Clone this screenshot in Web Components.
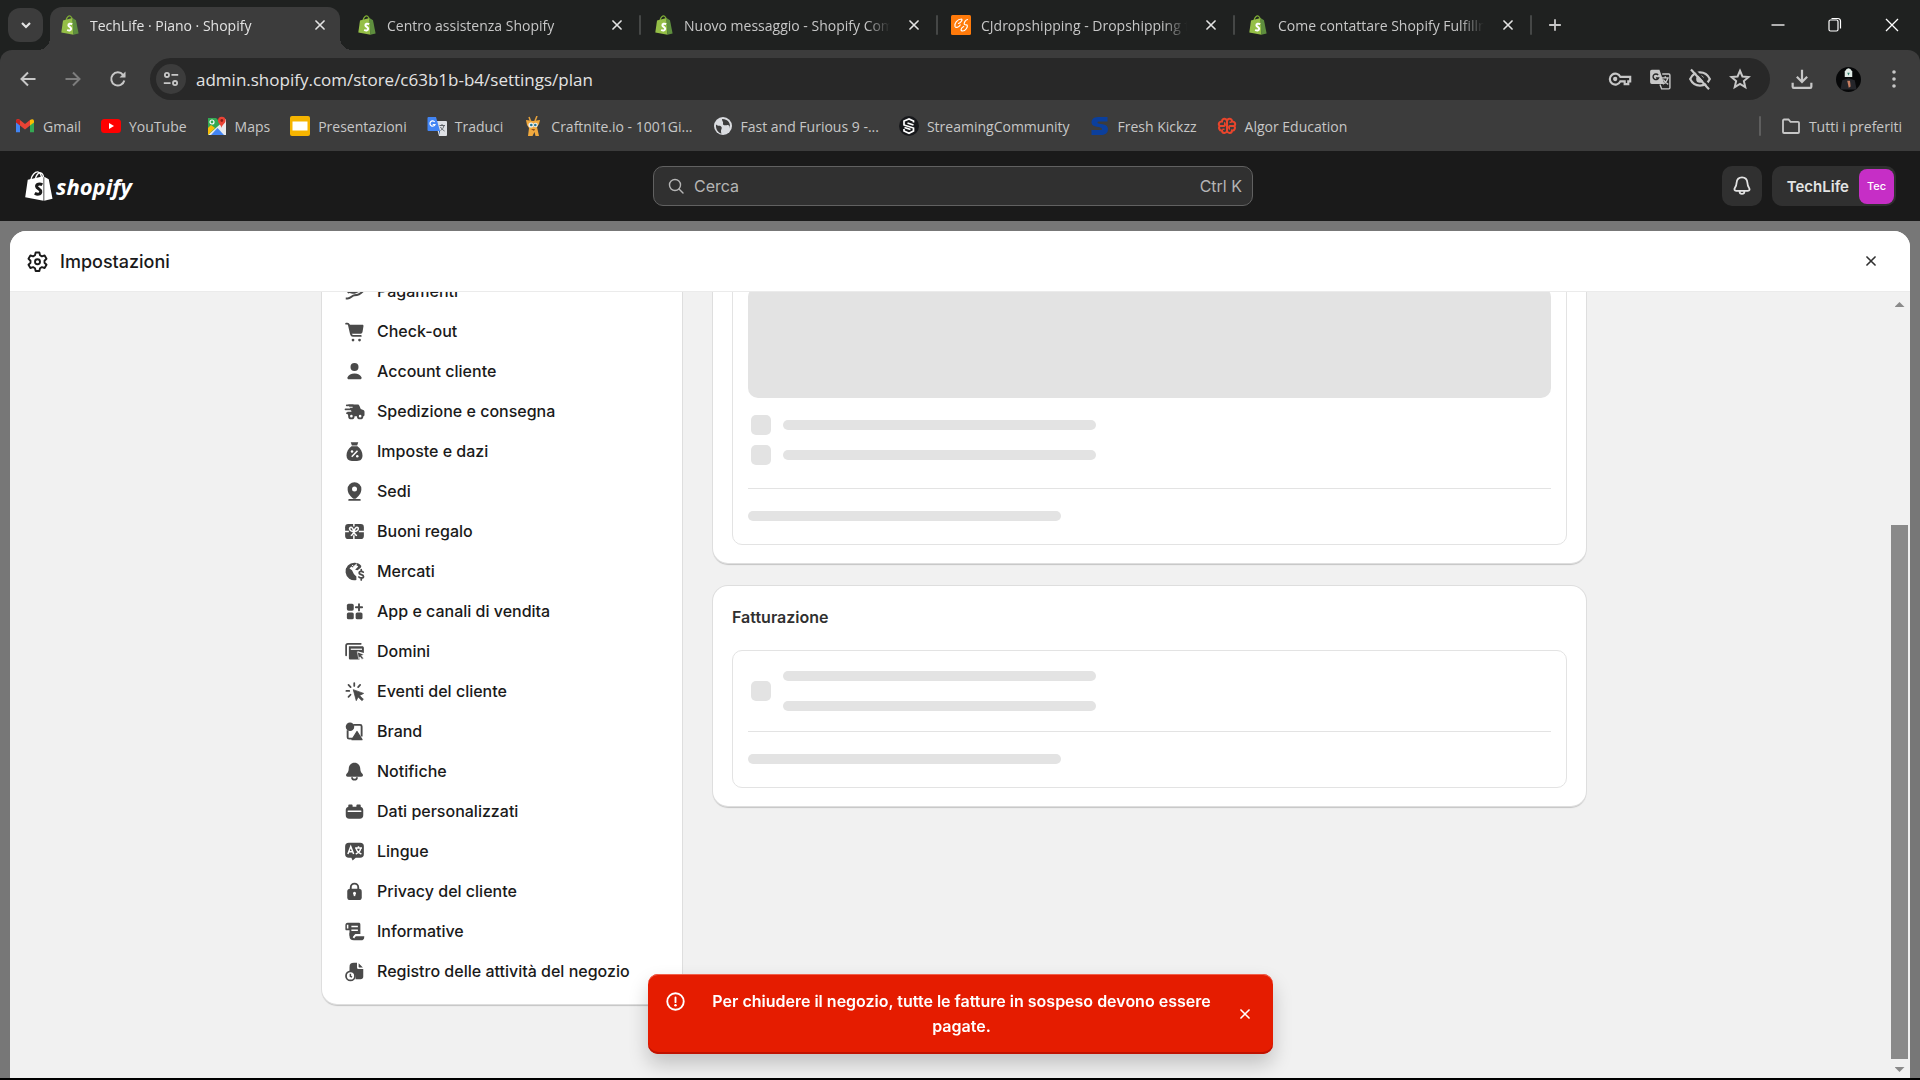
<!DOCTYPE html>
<html lang="it">
<head>
<meta charset="utf-8">
<title>TechLife · Piano · Shopify</title>
<style>
	body {
		margin: 0;
		background: #000;
		font-family: Inter, "Liberation Sans", sans-serif;
		color: #303030;
	}
</style>
</head>
<body>
<browser-window></browser-window>

<script>
const bagS = `d="M12.2 9.2c-1.8-1-4-.4-3.8 1.1.2 1.6 3 1.7 2.8 3.7-.2 1.7-2.3 1.8-4 .8" fill="none" stroke-width="2"`;

// every icon is drawn on a 20 x 20 grid
const ICONS = {
	chevron: `<path d="M6 8l4 4 4-4" fill="none" stroke="currentColor" stroke-width="2.2"/>`,
	close: `<path d="M5.5 5.5l9 9M14.5 5.5l-9 9" fill="none" stroke="currentColor" stroke-width="1.8" stroke-linecap="round"/>`,
	plus: `<path d="M10 3.5v13M3.5 10h13" stroke="currentColor" stroke-width="2"/>`,
	minimize: `<path d="M3.5 10h13" stroke="currentColor" stroke-width="1.3"/>`,
	restore: `<path d="M4 6.5A1.5 1.5 0 0 1 5.5 5h6A1.5 1.5 0 0 1 13 6.5v8a1.5 1.5 0 0 1-1.500 1.500h-6A1.500 1.500 0 0 1 4 14.500zM6.500 3.500H13A2.500 2.500 0 0 1 15.500 6v7.500" fill="none" stroke="currentColor" stroke-width="1.200"/>`,
	winclose: `<path d="M4 4l12 12M16 4L4 16" stroke="currentColor" stroke-width="1.3"/>`,
	back: `<path d="M17.500 10H3.500M10 3.500L3.500 10l6.500 6.500" fill="none" stroke="currentColor" stroke-width="2"/>`,
	forward: `<path d="M2.500 10h14M10 3.500l6.500 6.500-6.500 6.500" fill="none" stroke="currentColor" stroke-width="2"/>`,
	reload: `<path d="M16.300 11.500A6.600 6.600 0 1 1 15 5.800l1.600 1.700" fill="none" stroke="currentColor" stroke-width="2"/><path d="M17.500 2.500v6h-6z" fill="currentColor"/>`,
	tune: `<g fill="none" stroke="currentColor" stroke-width="2"><circle cx="5.500" cy="5.500" r="2.300"/><path d="M10.500 5.500H18M2 14.500h7.500"/><circle cx="14.500" cy="14.500" r="2.300"/></g>`,
	key: `<g fill="none" stroke="currentColor" stroke-width="1.800"><path d="M10.300 8.200H18.500v3.800h-1.600v2.300h-3v-2.300h-3.600a4.600 4.600 0 1 1 0-3.800z"/><circle cx="6" cy="10" r="1.300" fill="currentColor" stroke-width="1"/></g>`,
	translate: `<path d="M2.500 1.500h7l4.500 13H2.500a1.500 1.500 0 0 1-1.500-1.500V3a1.500 1.500 0 0 1 1.500-1.500z" fill="currentColor"/><path d="M8.300 6.300A2.600 2.600 0 1 0 8.700 9H6.300" fill="none" stroke="#282828" stroke-width="1.300"/><path d="M12 5.500h6a1 1 0 0 1 1 1V18a1 1 0 0 1-1 1h-6.500l-1.500-4M11.500 9h6.500M14.800 7.500V9M17 9.200c-.5 2.500-2.500 4.500-4.500 5.500M13 10.500c1 2 2.500 3.200 4.500 4.300" fill="none" stroke="currentColor" stroke-width="1.300"/>`,
	eyeoff: `<path d="M1.800 10C3.500 6.500 6.500 4.500 10 4.500s6.500 2 8.200 5.500c-1.700 3.500-4.700 5.500-8.200 5.500S3.500 13.500 1.800 10z" fill="none" stroke="currentColor" stroke-width="1.800"/><circle cx="10" cy="10" r="3.200" fill="currentColor"/><path d="M4.500 1.500l14 15" stroke="#282828" stroke-width="2"/><path d="M2.500 2l15 16.500" stroke="currentColor" stroke-width="1.800"/>`,
	star: `<path d="M10 2.500l2.200 5.200 5.600.5-4.300 3.700 1.300 5.500-4.800-2.900-4.800 2.900 1.300-5.500L2.200 8.200l5.600-.5z" fill="none" stroke="currentColor" stroke-width="1.800"/>`,
	download: `<path d="M10 1.500v11M5.300 8l4.700 4.700L14.700 8M1.500 13.500V17a1 1 0 0 0 1 1h15a1 1 0 0 0 1-1v-3.500" fill="none" stroke="currentColor" stroke-width="2"/>`,
	dots: `<g fill="currentColor"><circle cx="10" cy="3" r="1.800"/><circle cx="10" cy="10" r="1.800"/><circle cx="10" cy="17" r="1.800"/></g>`,
	avatar: `<circle cx="10" cy="10" r="10" fill="#070809"/><path d="M7 8V3.500Q10-1.500 13 3.500V8z" fill="#dfeae6"/><path d="M9 4.500h2L10 6.800z" fill="#2d7c68"/><path d="M3.500 18L5 10.500 10 9l5 1.500 1.500 7.500" fill="#24252a"/><path d="M9 11h2.200l.5 4.500-1.500 1z" fill="#c77e62"/>`,
	folder: `<path d="M2 4.500a1 1 0 0 1 1-1h4.500l2 2.300H17a1 1 0 0 1 1 1V16a1 1 0 0 1-1 1H3a1 1 0 0 1-1-1z" fill="none" stroke="currentColor" stroke-width="1.800"/>`,

	// site logos
	shopify: `<path d="M6 5.500C6.500 2 9 .3 10.500 1.200c1 .6 1.600 1.800 1.800 3.300" fill="none" stroke="#7fae35" stroke-width="1.200"/><path d="M3 5.600L12.500 3l1 16.800L1.300 17.500z" fill="#95bf47"/><path d="M12.500 3l3.500 2.300 2.600 13.200-5.300 1.300z" fill="#5e8e3e"/><path ${bagS} stroke="#fff"/>`,
	shopifywhite: `<path d="M4.500 6C5 2.800 7.500.2 9.500.7c1.300.4 2 2 2.200 3.800M7.500 5.500C8 3 9.500 1 11 1.200c1.200.3 1.900 1.500 2 3" fill="none" stroke="#fff" stroke-width=".9"/><path d="M2.500 5.800L13 3.500v16.300L.8 17.500zM13.500 3.800l3 1.700 2.500 13-5.500 1.300z" fill="#fff"/><path ${bagS} stroke="#1a1a1a"/>`,
	cj: `<rect width="20" height="20" rx="1.500" fill="#ff7a0a"/><path d="M10.500 4C6.500 4 3 8.500 4 11.500c1 2 4 .5 5.200-1.500M10.500 4c1.500.5-.8 4-3 4.500M16.500 4.500c-2 .5-3.500 3-3.300 4.700.2 1 2.800.3 3 .8.8 2-1.800 6-4.500 6-2.500 0-2-3 1-4.500" fill="none" stroke="#fff" stroke-width="1.200" stroke-linecap="round"/>`,
	gmail: `<path d="M1 4.500v11.700h4V9z" fill="#4285f4"/><path d="M19 4.500v11.700h-4V9z" fill="#34a853"/><path d="M1 4.500Q2.500 2 5 4l5 4 5-4v5.500l-5 4-5-4z" fill="#ea4335"/><path d="M1 4.500Q2 2.500 5 4v5.500L1 6.500z" fill="#c5221f"/><path d="M19 4.500Q18 2.500 15 4v5.500l4-3z" fill="#fbbc04"/>`,
	youtube: `<rect x="0" y="3" width="20" height="14" rx="3.500" fill="#f00"/><path d="M8 7l5 3-5 3z" fill="#fff"/>`,
	maps: `<path d="M1 2h8l10 10v7H1z" fill="#34a853"/><path d="M1 19L19 3v16z" fill="#e8eaed"/><path d="M4 19l6.500-7L17 19z" fill="#4285f4"/><path d="M1 12v7l7-7-4-3z" fill="#fbbc04"/><circle cx="5" cy="6" r="2" fill="none" stroke="#fff" stroke-width="1.200"/><path d="M14.500 12C14 8.500 11 7.500 11 4.500a3.800 3.800 0 0 1 7.600 0c0 3-3.600 4-4.100 7.500z" fill="#ea4335"/><circle cx="14.800" cy="4.500" r="1.400" fill="#8c1d16"/>`,
	slides: `<rect width="20" height="20" rx="2" fill="#f5b400"/><rect x="2.500" y="5.500" width="15" height="9" fill="#fff"/>`,
	gtranslate: `<path d="M8 5h11a1 1 0 0 1 1 1v13a1 1 0 0 1-1 1h-7z" fill="#dfe1e5"/><path d="M1.500 1h7.500l4 14H1.500a1 1 0 0 1-1-1V2a1 1 0 0 1 1-1z" fill="#4285f4"/><path d="M7.700 6A2.600 2.600 0 1 0 8 8.500H5.700" fill="none" stroke="#fff" stroke-width="1.200"/><path d="M12 15l1 0-1 4z" fill="#174ea6"/><path d="M12.500 9.500H18M15 8v1.500M17 9.500c-.5 2.500-2 4-3.500 5M13.500 11c1 2 2.500 3 4 4" fill="none" stroke="#5f6368" stroke-width="1"/>`,
	giraffe: `<path d="M6 1l1.500 4M14 0l-2 5" stroke="#e8a33c" stroke-width="1.500"/><path d="M3 4l7 1 7-1-1 4-2 3 2 9h-3.500l-1-4-2 4H5l1-8-2-3z" fill="#f0a93e"/><circle cx="8" cy="9" r="2.600" fill="#e9eff2"/><circle cx="12.500" cy="9" r="2.300" fill="#e9eff2"/><circle cx="8.300" cy="9" r="1.300" fill="#27758f"/><circle cx="12.300" cy="9" r="1.300" fill="#27758f"/><path d="M8 13h4l-1 2z" fill="#8a4b1c"/>`,
	globe: `<circle cx="10" cy="10" r="9" fill="#dadce0"/><path d="M3 8.500c2 2 4.500.5 5.500 2.500s-1.500 2.500 0 6.500C5 17 2.500 13 3 8.500zM9 3c0 2.500 1.500 2.500 1 4.500s2.500 2 4.500 1.500 2.500 2 1.500 4C18.500 9 16 3 9 3z" fill="#3c3c3c"/>`,
	streaming: `<circle cx="10" cy="10" r="10" fill="#17181b"/><path d="M14.500 6.500V5L10 3 5 5v4l9.500 3v3L10 17.300 5 15v-2M14.500 9l-6-2M5.500 11.500l6 2" fill="none" stroke="#fff" stroke-width="1.700"/>`,
	kickzz: `<path d="M17.500 5.500V1H8C3 1 1.500 4 1.500 6.500c0 5.500 10.500 3.500 10.500 6.500 0 1-1 1-2.500 1h-8v5H11c5 0 7-2.500 7-6 0-6.500-10.500-4-10.500-6.500 0-1 1-1 2-1z" fill="#0b3f9c"/>`,
	brain: `<g fill="none" stroke="#e8452c" stroke-width="2"><path d="M10 3v14M10 5c-1-3.500-5-2.500-5 .5-3.500 0-4 3.500-2 4.500-2 1.500-.5 5 2 4.500 0 3 4 3.500 5 .5 1 3 5 2.500 5-.5 2.500.5 4-3 2-4.500 2-1 1.500-4.500-2-4.500 0-3-4-4-5-.5z"/><path d="M3 10h4c1.500 0 1-3 0-3M17 10h-4c-1.500 0-1 3 0 3M6.500 14v-1.500M13.500 7V5.500"/></g>`,

	// admin
	search: `<circle cx="9" cy="9" r="5.500" fill="none" stroke="currentColor" stroke-width="1.400"/><path d="M13 13l4 4" stroke="currentColor" stroke-width="1.400" stroke-linecap="round"/>`,
	bell: `<path d="M10 2.800c-2.700 0-4.300 2-4.500 4.500-.1 2-.4 3-1.400 4.300-.9 1.200-.3 2.400 1 2.400h9.800c1.300 0 1.900-1.200 1-2.400-1-1.300-1.300-2.300-1.400-4.300-.2-2.500-1.800-4.500-4.500-4.500zM8 14.500a2 2 0 0 0 4 0" fill="none" stroke="currentColor" stroke-width="1.500"/>`,
	gear: `<path d="M8.500 2.800h3l.5 2.200 1.500.9 2.200-.7 1.500 2.600-1.600 1.600v1.600l1.600 1.600-1.500 2.600-2.200-.7-1.500.9-.5 2.200h-3L8 15.400l-1.500-.9-2.200.7-1.500-2.600L4.400 11V9.400L2.800 7.800l1.500-2.600 2.200.7L8 5z" fill="none" stroke="currentColor" stroke-width="1.500" stroke-linejoin="round"/><circle cx="10" cy="10.200" r="2" fill="none" stroke="currentColor" stroke-width="1.500"/>`,
	alert: `<circle cx="10" cy="10" r="6.600" fill="none" stroke="currentColor" stroke-width="1.500"/><path d="M10 6.700v3.800" stroke="currentColor" stroke-width="1.500" stroke-linecap="round"/><circle cx="10" cy="13" r="1" fill="currentColor"/>`,

	// settings menu
	payments: `<path d="M3 15.500h1.500c2.500 0 3.500-2.500 5.500-2.500s4.500-.5 7-3.500M4.500 11c2-1.500 3.500.5 5.500 0l7-3" fill="none" stroke="currentColor" stroke-width="1.600"/>`,
	cart: `<path d="M3.300 3.700h1c.7 0 1 .3 1.200 1l1.700 7.300c.2.800.6 1.500 1.500 1.500h6.300" fill="none" stroke="currentColor" stroke-width="1.500" stroke-linecap="round"/><path d="M5.500 4.500h10.800c.6 0 1 .5.9 1l-.8 4.900a1.500 1.500 0 0 1-1.500 1.300H7z" fill="currentColor"/><circle cx="8.800" cy="16.800" r="1.100" fill="currentColor"/><circle cx="14" cy="16.800" r="1.100" fill="currentColor"/>`,
	person: `<circle cx="10" cy="6.300" r="3.200" fill="currentColor"/><path d="M10 11.500c-2.700 0-4.800 1.300-5.600 3-.4.9.3 1.700 1.200 1.700h8.800c.9 0 1.600-.8 1.200-1.700-.8-1.700-2.900-3-5.600-3z" fill="currentColor"/>`,
	truck: `<path d="M5 4.300h7.500c.9 0 1.200.5 1.500 1.200l1 2.500 2 .7c.7.3 1 .7 1 1.500v2.300c0 .8-.5 1.300-1.300 1.300H5.500L4.300 12V9.500h3z" fill="currentColor"/><path d="M3.800 5h5M2.800 8.200h6M4 11.300h3" fill="none" stroke="currentColor" stroke-width="1.400" stroke-linecap="round"/><path d="M4.500 6.600h4M3.500 9.800h4" stroke="#fff" stroke-width=".9"/><g fill="#fff" stroke="currentColor" stroke-width="1.500"><circle cx="7.500" cy="13.700" r="1.800"/><circle cx="14.500" cy="13.700" r="1.800"/></g>`,
	moneybag: `<path d="M7 2.500h6l-.9 2.600H7.900zM7.600 5.800h4.800c2.700 2 4 4.800 4 7.400 0 2.900-1.500 4.300-4.400 4.300H8c-2.900 0-4.400-1.400-4.400-4.300 0-2.600 1.300-5.400 4-7.400z" fill="currentColor"/><path d="M7.800 14.200l4.600-4.800" stroke="#fff" stroke-width="1.200"/><circle cx="8" cy="10" r="1" fill="#fff"/><circle cx="12.200" cy="13.700" r="1" fill="#fff"/>`,
	pin: `<path d="M10 2.500a5.500 5.500 0 0 0-5.500 5.600c0 3.600 2.600 5.800 4.700 7.600h1.600c2.100-1.800 4.700-4 4.700-7.600A5.500 5.500 0 0 0 10 2.500z" fill="currentColor"/><circle cx="10" cy="8" r="2" fill="#fff"/><path d="M5.700 16.700h8.600" stroke="currentColor" stroke-width="1.400" stroke-linecap="round"/>`,
	giftcard: `<rect x="2.500" y="4" width="15" height="12" rx="2.500" fill="currentColor"/><path d="M9.500 3.500V6M9.500 13v3.500M2 10h3.500M13.500 10H18M9.500 10C6 10 5.500 7.500 6.700 6.800S9 8 9.500 10c.5-2 1.800-3.800 3-3.200s.5 3.200-3 3.200zM9.500 10c-.5 2-1.500 3-2.500 3.300M9.500 10c.5 2 1.500 3 2.500 3.300" fill="none" stroke="#fff" stroke-width="1.200"/>`,
	markets: `<path d="M10 3a7 7 0 1 0 1.500 13.800V14l-2-2-1.500-3L6 7.500 7.500 6l1.200.8L11 4.500l2 1.500-2.500 2.500 2 .5 2.500-2 .5-1.500A7 7 0 0 0 10 3z" fill="currentColor"/><path d="M3.500 7.500l3 3 2.500 5.800" fill="none" stroke="currentColor"/><path d="M17 10.500c-1-.8-3.300-.8-3.300.7 0 1.600 3.500 1 3.500 2.700s-2.700 1.500-3.700.5M15.400 8.500v1M15.400 15.500v1.200" fill="none" stroke="currentColor" stroke-width="1.400" stroke-linecap="round"/><path d="M8 5l1.500 1L12 3.800" fill="none" stroke="#fff" stroke-width=".8"/>`,
	apps: `<g fill="currentColor"><rect x="3.900" y="3.800" width="5.500" height="5.500" rx="1.300"/><rect x="3.900" y="10.700" width="5.500" height="5.500" rx="1.300"/><rect x="10.900" y="10.700" width="5.500" height="5.500" rx="1.300"/></g><path d="M13.600 4.100v5M11.100 6.600h5" stroke="currentColor" stroke-width="1.500" stroke-linecap="round"/>`,
	domains: `<path d="M3.300 13V5.200c0-.9.5-1.400 1.400-1.400H15" fill="none" stroke="currentColor" stroke-width="1.400" stroke-linecap="round"/><path d="M5.500 5.700H16c1 0 1.500.5 1.500 1.500v4l-5-1.500 1.600 6.700H6.800c-.9 0-1.300-.5-1.300-1.300z" fill="currentColor"/><path d="M7 8.200h9" stroke="#fff" stroke-width="1"/><path d="M12.200 10.300l5.400 2-2 1 1.700 2-1.300 1-1.600-2-1 1.500z" fill="currentColor" stroke="#fff" stroke-width=".5"/>`,
	click: `<path d="M9 8.500l8.300 3-3.200 1.700 3 3-1.200 1.100-3-3-1.500 3z" fill="currentColor" stroke="currentColor" stroke-width=".6" stroke-linejoin="round"/><path d="M9.800 3.200v2.300M5.200 4.700l1.700 1.800M14.500 4.700l-1.600 1.800M3.500 9.500h2.300M5.200 14.300l1.600-1.700" stroke="currentColor" stroke-width="1.400" stroke-linecap="round"/>`,
	brand: `<path d="M4.500 9v5.500c0 .8.4 1.200 1.200 1.200H9M9 4.700h5.500c.8 0 1.200.4 1.200 1.200V14" fill="none" stroke="currentColor" stroke-width="1.500"/><circle cx="6.400" cy="6.200" r="3.400" fill="currentColor"/><path d="M12 10l4 6.500H8z" fill="currentColor" stroke="currentColor" stroke-linejoin="round"/>`,
	bellfill: `<path d="M10 3C7.200 3 5.600 5 5.400 7.500c-.1 2-.5 3-1.700 4.300-1 1.200-.4 2.400 1 2.400h10.600c1.400 0 2-1.200 1-2.400-1.200-1.300-1.600-2.300-1.700-4.300C14.400 5 12.800 3 10 3z" fill="currentColor"/><path d="M8 14.500a2 2 0 0 0 4 0" fill="none" stroke="currentColor" stroke-width="1.400"/>`,
	brick: `<path d="M5 5.300c0-.6.3-1 1-1h1.500c.7 0 1 .4 1 1v.9h3v-.9c0-.6.3-1 1-1H14c.7 0 1 .4 1 1v1c1.300.2 2 1.200 2 2.500V13c0 1.800-1 2.800-2.800 2.800H5.800C4 15.800 3 14.800 3 13V8.800c0-1.300.7-2.300 2-2.500z" fill="currentColor"/><path d="M5 9.800h10" stroke="#fff" stroke-width="1.200" stroke-linecap="round"/>`,
	languages: `<path d="M5.500 3h9c2 0 3 1 3 3v6c0 2-1 3-3 3H11l-2.500 2.200-1-2.200h-2c-2 0-3-1-3-3V6c0-2 1-3 3-3z" fill="currentColor"/><path d="M4.700 12L7 6l2.300 6M5.500 10.200h3M10.500 7.200H16M13.200 5.800v1.400M15 7.500c-.5 2-2.200 3.800-4 4.500M11.300 7.500c.5 2 2.500 3.800 4.200 4.500" fill="none" stroke="#fff" stroke-width="1.200"/>`,
	lock: `<path d="M7 8.500V6.700a3 3 0 0 1 6 0v1.800" fill="none" stroke="currentColor" stroke-width="1.500"/><rect x="4.200" y="7.800" width="11.600" height="9" rx="2.300" fill="currentColor"/><circle cx="10" cy="11.300" r="1.200" fill="#fff"/><path d="M10 11.500v2.200" stroke="#fff" stroke-width="1.300"/>`,
	policy: `<path d="M4.500 3h8.700c1 0 1.500.5 1.500 1.500V12h-4l-2 2.500H8c-1.200 0-2-.7-2-2V9H3.500C3 9 2.700 8.700 2.700 8V5c0-1.200.6-2 1.800-2z" fill="currentColor"/><path d="M4.500 4.500v3M7.500 6h5.200M7.500 9h5.200" stroke="#fff" stroke-width="1.200"/><path d="M6.500 11v2.500c0 2 1 3 3 3H15c1.500 0 2.300-.7 2.300-2.200h-6L10 16" fill="currentColor" stroke="currentColor" stroke-width="1"/><path d="M9 15l1-2h5" fill="none" stroke="#fff" stroke-width=".8"/>`,
	activity: `<path d="M9.500 3H12v3.500c0 1 .5 1.500 1.500 1.500H17v6c0 1.500-.8 2.200-2.200 2.200h-4C11.500 12 9 9.500 6 9.500v-3C6 4 7 3 9.500 3zM13.300 3.300l3.400 3.500h-2.500c-.6 0-.9-.3-.9-.9z" fill="currentColor"/><circle cx="6.800" cy="13.500" r="3.600" fill="#fff" stroke="currentColor" stroke-width="1.400"/><path d="M6.700 11.800v2l1.300.7" fill="none" stroke="currentColor" stroke-width="1.200"/>`,
};

class UiIcon extends HTMLElement {
	constructor(){
		super();
		this.attachShadow({mode:"open"});
	}

	connectedCallback(){
		const size = this.getAttribute("size") || "20";
		this.shadowRoot.innerHTML = /*html*/`
			<style>
				:host { display: block; flex: none; width: ${size}px; height: ${size}px; }
				svg { display: block; }
			</style>
			<svg width="${size}" height="${size}" viewBox="0 0 20 20" aria-hidden="true">${ICONS[this.getAttribute("name")]}</svg>
		`;
	}
}
customElements.define("ui-icon",UiIcon);

class BrowserTab extends HTMLElement {
	constructor(){
		super();
		this.attachShadow({mode:"open"});
	}

	connectedCallback(){
		this.shadowRoot.innerHTML = /*html*/`
			<style>
				:host {
					display: flex;
					align-items: center;
					box-sizing: border-box;
					flex: 0 1 290px;
					min-width: 0;
					height: 43px;
					padding: 0 10px 7px 10px;
					position: relative;
					color: #c7c7c7;
				}
				:host([active]) {
					background: #3c3c3c;
					border-radius: 12px 12px 0 0;
					color: #e3e3e3;
				}
				:host([active])::before, :host([active])::after {
					content: "";
					position: absolute;
					bottom: 0;
					width: 12px;
					height: 12px;
				}
				:host([active])::before {
					right: 100%;
					background: radial-gradient(circle at 0 0, transparent 12px, #3c3c3c 12px);
				}
				:host([active])::after {
					left: 100%;
					background: radial-gradient(circle at 100% 0, transparent 12px, #3c3c3c 12px);
				}
				span {
					flex: 1;
					min-width: 0;
					margin: 0 14px 0 10px;
					overflow: hidden;
					white-space: nowrap;
					mask-image: linear-gradient(to left, transparent, #000 24px);
				}
				button {
					display: grid;
					place-items: center;
					width: 20px;
					height: 20px;
					padding: 0;
					border: 0;
					background: none;
					color: #e3e3e3;
				}
			</style>
			<ui-icon name="${this.getAttribute("icon")}" size="20"></ui-icon>
			<span><slot></slot></span>
			<button aria-label="Chiudi scheda"><ui-icon name="close" size="18"></ui-icon></button>
		`;
	}
}
customElements.define("browser-tab",BrowserTab);

class BookmarkLink extends HTMLElement {
	constructor(){
		super();
		this.attachShadow({mode:"open"});
	}

	connectedCallback(){
		this.shadowRoot.innerHTML = /*html*/`
			<style>
				:host { display: block; flex: none; }
				a {
					display: flex;
					align-items: center;
					gap: 8px;
					color: #c7c7c7;
					text-decoration: none;
					white-space: nowrap;
				}
			</style>
			<a href="#"><ui-icon name="${this.getAttribute("icon")}" size="20"></ui-icon><slot></slot></a>
		`;
	}
}
customElements.define("bookmark-link",BookmarkLink);

class BrowserChrome extends HTMLElement {
	constructor(){
		super();
		this.attachShadow({mode:"open"});
		this.shadowRoot.innerHTML = /*html*/`
			<style>
				:host {
					display: block;
					background: #1f2120;
					font: 14px "Open Sans", "Noto Sans", sans-serif;
					color: #c7c7c7;
				}
				button {
					display: grid;
					place-items: center;
					flex: none;
					padding: 0;
					border: 0;
					background: none;
					color: inherit;
				}
				.strip {
					display: flex;
					align-items: flex-end;
					height: 50px;
				}
				.tabsearch {
					width: 35px;
					height: 34px;
					margin: 0 7px 8px 8px;
					border-radius: 12px;
					background: #3c3c3c;
					color: #e3e3e3;
				}
				.sep {
					flex: none;
					width: 2px;
					height: 20px;
					margin: 0 3px 15px 2px;
					border-radius: 1px;
					background: #454746;
				}
				.sep.off { background: none; }
				.newtab { width: 40px; height: 50px; }
				.win {
					display: flex;
					margin-left: auto;
					color: #fff;
				}
				.win button { width: 57px; height: 50px; }
				.toolbar {
					background: #3c3c3c;
					border-radius: 12px 12px 0 0;
				}
				.row {
					display: flex;
					align-items: center;
					height: 58px;
					padding: 0 3px 0 5px;
				}
				.nav { width: 45px; height: 40px; }
				.nav[disabled] { color: #7d7d7d; }
				.omnibox {
					display: flex;
					align-items: center;
					flex: 1;
					height: 42px;
					box-sizing: border-box;
					margin: 0 9px 0 10px;
					padding: 0 10px 0 6px;
					border-radius: 21px;
					background: #282828;
				}
				.site {
					width: 30px;
					height: 30px;
					border-radius: 15px;
					background: #3c3c3c;
					margin-right: 10px;
				}
				input {
					flex: 1;
					min-width: 0;
					padding: 0;
					border: 0;
					outline: 0;
					background: none;
					font: 17px "Open Sans", "Noto Sans", sans-serif;
					color: #e3e3e3;
				}
				.omnibox > .act { width: 40px; height: 40px; }
				.tools {
					display: flex;
					align-items: center;
				}
				.tools button { width: 46px; height: 40px; }
				nav {
					display: flex;
					align-items: center;
					gap: 20px;
					height: 36px;
					padding: 0 18px 7px 15px;
					overflow: hidden;
				}
				nav .sep { margin: 0 0 0 auto; background: #5e5e5e; }
			</style>
			<div class="strip">
				<button class="tabsearch" aria-label="Cerca tra le schede"><ui-icon name="chevron" size="20"></ui-icon></button>
				<browser-tab icon="shopify" active>TechLife · Piano · Shopify</browser-tab>
				<i class="sep off"></i>
				<browser-tab icon="shopify">Centro assistenza Shopify</browser-tab>
				<i class="sep"></i>
				<browser-tab icon="shopify">Nuovo messaggio - Shopify Community</browser-tab>
				<i class="sep"></i>
				<browser-tab icon="cj">CJdropshipping - Dropshipping from</browser-tab>
				<i class="sep"></i>
				<browser-tab icon="shopify">Come contattare Shopify Fulfillment</browser-tab>
				<i class="sep"></i>
				<button class="newtab" aria-label="Nuova scheda"><ui-icon name="plus" size="18"></ui-icon></button>
				<div class="win">
					<button aria-label="Riduci"><ui-icon name="minimize"></ui-icon></button>
					<button aria-label="Ripristina"><ui-icon name="restore"></ui-icon></button>
					<button aria-label="Chiudi"><ui-icon name="winclose"></ui-icon></button>
				</div>
			</div>
			<div class="toolbar">
				<div class="row">
					<button class="nav" aria-label="Indietro"><ui-icon name="back"></ui-icon></button>
					<button class="nav" aria-label="Avanti" disabled><ui-icon name="forward"></ui-icon></button>
					<button class="nav" aria-label="Ricarica"><ui-icon name="reload"></ui-icon></button>
					<div class="omnibox">
						<button class="site" aria-label="Informazioni sul sito"><ui-icon name="tune" size="18"></ui-icon></button>
						<input aria-label="Indirizzo" value="admin.shopify.com/store/c63b1b-b4/settings/plan">
						<button class="act" aria-label="Password"><ui-icon name="key" size="24"></ui-icon></button>
						<button class="act" aria-label="Traduci la pagina"><ui-icon name="translate" size="22"></ui-icon></button>
						<button class="act" aria-label="Cookie bloccati"><ui-icon name="eyeoff" size="24"></ui-icon></button>
						<button class="act" aria-label="Preferito"><ui-icon name="star" size="22"></ui-icon></button>
					</div>
					<div class="tools">
						<button aria-label="Download"><ui-icon name="download" size="22"></ui-icon></button>
						<button aria-label="Profilo"><ui-icon name="avatar" size="25"></ui-icon></button>
						<button aria-label="Menu"><ui-icon name="dots" size="20"></ui-icon></button>
					</div>
				</div>
				<nav>
					<bookmark-link icon="gmail">Gmail</bookmark-link>
					<bookmark-link icon="youtube">YouTube</bookmark-link>
					<bookmark-link icon="maps">Maps</bookmark-link>
					<bookmark-link icon="slides">Presentazioni</bookmark-link>
					<bookmark-link icon="gtranslate">Traduci</bookmark-link>
					<bookmark-link icon="giraffe">Craftnite.io - 1001Gi...</bookmark-link>
					<bookmark-link icon="globe">Fast and Furious 9 -...</bookmark-link>
					<bookmark-link icon="streaming">StreamingCommunity</bookmark-link>
					<bookmark-link icon="kickzz">Fresh Kickzz</bookmark-link>
					<bookmark-link icon="brain">Algor Education</bookmark-link>
					<i class="sep"></i>
					<bookmark-link icon="folder">Tutti i preferiti</bookmark-link>
				</nav>
			</div>
		`;
	}
}
customElements.define("browser-chrome",BrowserChrome);

class AdminTopbar extends HTMLElement {
	constructor(){
		super();
		this.attachShadow({mode:"open"});
		this.shadowRoot.innerHTML = /*html*/`
			<style>
				:host {
					display: flex;
					align-items: center;
					gap: 20px;
					height: 70px;
					padding: 0 24px;
					background: #1a1a1a;
				}
				.logo {
					display: flex;
					align-items: center;
					gap: 2px;
					flex: 1 1 0;
					color: #fff;
					font: italic 700 22px "Open Sans", sans-serif;
					text-decoration: none;
				}
				.search {
					display: flex;
					align-items: center;
					gap: 8px;
					box-sizing: border-box;
					flex: 0 1 600px;
					height: 40px;
					padding: 0 10px 0 12px;
					border: 1px solid #616161;
					border-radius: 10px;
					background: #303030;
					color: #b5b5b5;
				}
				input {
					flex: 1;
					min-width: 0;
					padding: 0;
					border: 0;
					outline: 0;
					background: none;
					color: #b5b5b5;
					font: 16px Inter, sans-serif;
				}
				input::placeholder { color: #b5b5b5; }
				kbd { font: 16px Inter, sans-serif; }
				.right {
					display: flex;
					justify-content: flex-end;
					gap: 10px;
					flex: 1 1 14px;
				}
				button {
					display: flex;
					align-items: center;
					justify-content: center;
					height: 40px;
					padding: 0;
					border: 0;
					border-radius: 10px;
					background: #303030;
					color: #e3e3e3;
				}
				.bell { width: 40px; }
				.account {
					gap: 10px;
					padding: 0 2px 0 15px;
					font: 600 15px Inter, sans-serif;
				}
				.account b {
					display: grid;
					place-items: center;
					width: 35px;
					height: 35px;
					border-radius: 8px;
					background: #c62ec6;
					color: #fff;
					font: 500 11px Inter, sans-serif;
				}
			</style>
			<a class="logo" href="#"><ui-icon name="shopifywhite" size="30"></ui-icon>shopify</a>
			<label class="search">
				<ui-icon name="search" size="20"></ui-icon>
				<input type="text" aria-label="Cerca" placeholder="Cerca">
				<kbd>Ctrl K</kbd>
			</label>
			<div class="right">
				<button class="bell" aria-label="Avvisi"><ui-icon name="bell" size="24"></ui-icon></button>
				<button class="account">TechLife<b>Tec</b></button>
			</div>
		`;
	}
}
customElements.define("admin-topbar",AdminTopbar);

class SettingsLink extends HTMLElement {
	constructor(){
		super();
		this.attachShadow({mode:"open"});
	}

	connectedCallback(){
		this.shadowRoot.innerHTML = /*html*/`
			<style>
				:host { display: block; }
				a {
					display: flex;
					align-items: center;
					gap: 10px;
					height: 40px;
					padding: 0 20px;
					color: #1a1a1a;
					font-size: 16px;
					font-weight: 500;
					text-decoration: none;
					white-space: nowrap;
				}
				ui-icon { color: #4a4a4a; }
			</style>
			<a href="#"><ui-icon name="${this.getAttribute("icon")}" size="25"></ui-icon><slot></slot></a>
		`;
	}
}
customElements.define("settings-link",SettingsLink);

class SkeletonLine extends HTMLElement {
	constructor(){
		super();
		this.attachShadow({mode:"open"});
		this.shadowRoot.innerHTML = /*html*/`
			<style>
				:host {
					display: block;
					width: 313px;
					max-width: 80%;
					height: 10px;
					border-radius: 5px;
					background: #e3e3e3;
				}
				:host([box]) { width: 20px; height: 20px; flex: none; }
				:host([block]) { width: auto; max-width: none; height: 111px; border-radius: 10px; }
			</style>
		`;
	}
}
customElements.define("skeleton-line",SkeletonLine);

class SettingsCard extends HTMLElement {
	constructor(){
		super();
		this.attachShadow({mode:"open"});
		this.shadowRoot.innerHTML = /*html*/`
			<style>
				:host {
					display: block;
					padding: 19px 19px 18px;
					border-radius: 15px;
					background: #fff;
					box-shadow: 0 0 0 1px #dedede, 0 2px 1px #c4c4c4;
				}
				:host([menu]) { padding: 0 0 13px; }
				.body {
					padding: 15px 15px 23px;
					border: 1px solid #e3e3e3;
					border-radius: 10px;
				}
				:host([menu]) .body { padding: 0; border: 0; }
			</style>
			<slot name="title"></slot>
			<div class="body"><slot></slot></div>
		`;
	}
}
customElements.define("settings-card",SettingsCard);

class SettingsPanel extends HTMLElement {
	constructor(){
		super();
		this.attachShadow({mode:"open"});
		this.shadowRoot.innerHTML = /*html*/`
			<style>
				:host {
					display: flex;
					flex-direction: column;
					min-height: 0;
					border-radius: 16px 16px 0 0;
					background: #f1f1f1;
					overflow: hidden;
				}
				header {
					display: flex;
					align-items: center;
					gap: 10px;
					flex: none;
					height: 60px;
					padding: 0 30px 0 15px;
					border-bottom: 1px solid #ebebeb;
					background: #fff;
					color: #1a1a1a;
				}
				h1 { margin: 0; font-size: 18px; font-weight: 500; }
				header button {
					display: grid;
					place-items: center;
					margin-left: auto;
					padding: 0;
					border: 0;
					background: none;
					color: #303030;
				}
				.view {
					display: flex;
					flex: 1;
					min-height: 0;
				}
				/* kept at the end of its scroll range */
				.page {
					display: flex;
					flex-direction: column;
					justify-content: flex-end;
					align-items: center;
					flex: 1;
					padding: 0 0 74px 7px;
					overflow: hidden;
				}
				.columns {
					display: grid;
					grid-template-columns: 360px 1fr;
					gap: 31px;
					align-items: start;
					width: 100%;
					max-width: 1264px;
				}
				main { display: grid; gap: 23px; }
				.plan { padding-top: 0; }
				h2 {
					margin: 0 0 21px;
					color: #303030;
					font-size: 16px;
					font-weight: 600;
					line-height: 24px;
				}
				.item {
					display: flex;
					align-items: center;
					gap: 12px;
					padding-left: 3px;
					height: 20px;
					margin-top: 10px;
				}
				.item.first { margin-top: 17px; }
				.item.tall { height: 50px; margin: 0; }
				.item.tall div { display: grid; gap: 20px; flex: 1; }
				hr {
					height: 1px;
					margin: 23px 0 22px;
					border: 0;
					background: #e3e3e3;
				}
				hr.near { margin-top: 15px; }
				.scroll {
					display: flex;
					flex-direction: column;
					align-items: center;
					width: 17px;
					padding: 10px 2px 6px 0;
				}
				.scroll i { width: 17px; background: #8a8a8a; }
				.scroll .up, .scroll .down { width: 10px; height: 5px; }
				.up { clip-path: polygon(50% 0, 100% 100%, 0 100%); }
				.down { clip-path: polygon(0 0, 100% 0, 50% 100%); }
				.scroll .thumb { flex: 533; margin: 0 0 8px; }
				.scroll b { flex: 218; }
			</style>
			<header>
				<ui-icon name="gear" size="25"></ui-icon>
				<h1>Impostazioni</h1>
				<button aria-label="Chiudi"><ui-icon name="close" size="18"></ui-icon></button>
			</header>
			<div class="view">
				<div class="page">
					<div class="columns">
						<settings-card menu>
							<settings-link icon="payments">Pagamenti</settings-link>
							<settings-link icon="cart">Check-out</settings-link>
							<settings-link icon="person">Account cliente</settings-link>
							<settings-link icon="truck">Spedizione e consegna</settings-link>
							<settings-link icon="moneybag">Imposte e dazi</settings-link>
							<settings-link icon="pin">Sedi</settings-link>
							<settings-link icon="giftcard">Buoni regalo</settings-link>
							<settings-link icon="markets">Mercati</settings-link>
							<settings-link icon="apps">App e canali di vendita</settings-link>
							<settings-link icon="domains">Domini</settings-link>
							<settings-link icon="click">Eventi del cliente</settings-link>
							<settings-link icon="brand">Brand</settings-link>
							<settings-link icon="bellfill">Notifiche</settings-link>
							<settings-link icon="brick">Dati personalizzati</settings-link>
							<settings-link icon="languages">Lingue</settings-link>
							<settings-link icon="lock">Privacy del cliente</settings-link>
							<settings-link icon="policy">Informative</settings-link>
							<settings-link icon="activity">Registro delle attività del negozio</settings-link>
						</settings-card>
						<main>
							<settings-card class="plan">
								<skeleton-line block></skeleton-line>
								<div class="item first"><skeleton-line box></skeleton-line><skeleton-line></skeleton-line></div>
								<div class="item"><skeleton-line box></skeleton-line><skeleton-line></skeleton-line></div>
								<hr>
								<skeleton-line></skeleton-line>
							</settings-card>
							<settings-card>
								<h2 slot="title">Fatturazione</h2>
								<div class="item tall">
									<skeleton-line box></skeleton-line>
									<div><skeleton-line></skeleton-line><skeleton-line></skeleton-line></div>
								</div>
								<hr class="near">
								<skeleton-line></skeleton-line>
							</settings-card>
						</main>
					</div>
				</div>
				<div class="scroll"><i class="up"></i><b></b><i class="thumb"></i><i class="down"></i></div>
			</div>
		`;
	}
}
customElements.define("settings-panel",SettingsPanel);

class ErrorToast extends HTMLElement {
	constructor(){
		super();
		this.attachShadow({mode:"open"});
		this.shadowRoot.innerHTML = /*html*/`
			<style>
				:host {
					display: flex;
					align-items: center;
					gap: 15px;
					box-sizing: border-box;
					position: fixed;
					left: 0;
					right: 0;
					bottom: 26px;
					width: 625px;
					max-width: 100%;
					margin: 0 auto;
					padding: 15px 19px 15px 15px;
					border-radius: 10px;
					background: #e51c00;
					color: #fff;
					box-shadow: inset 0 1px #f0604c, inset 0 -2px #c01200, 0 10px 20px #00000033;
				}
				ui-icon.alert { align-self: flex-start; }
				p {
					flex: 1;
					margin: 0;
					font-size: 16px;
					font-weight: 600;
					line-height: 25px;
					text-align: center;
				}
				button {
					padding: 0;
					border: 0;
					background: none;
					color: inherit;
				}
			</style>
			<ui-icon class="alert" name="alert" size="25"></ui-icon>
			<p><slot></slot></p>
			<button aria-label="Chiudi"><ui-icon name="close" size="18"></ui-icon></button>
		`;
	}
}
customElements.define("error-toast",ErrorToast);

class BrowserWindow extends HTMLElement {
	constructor(){
		super();
		this.attachShadow({mode:"open"});
		this.shadowRoot.innerHTML = /*html*/`
			<style>
				:host {
					display: flex;
					flex-direction: column;
					box-sizing: border-box;
					height: 100vh;
					padding-bottom: 2px;
					overflow: hidden;
				}
				.backdrop {
					display: flex;
					flex: 1;
					min-height: 0;
					padding: 10px 10px 0;
					background: #777;
				}
				settings-panel { flex: 1; min-width: 0; }
			</style>
			<browser-chrome></browser-chrome>
			<admin-topbar></admin-topbar>
			<div class="backdrop"><settings-panel></settings-panel></div>
			<error-toast>Per chiudere il negozio, tutte le fatture in sospeso devono essere pagate.</error-toast>
		`;
	}
}
customElements.define("browser-window",BrowserWindow);
</script>
</body>
</html>
